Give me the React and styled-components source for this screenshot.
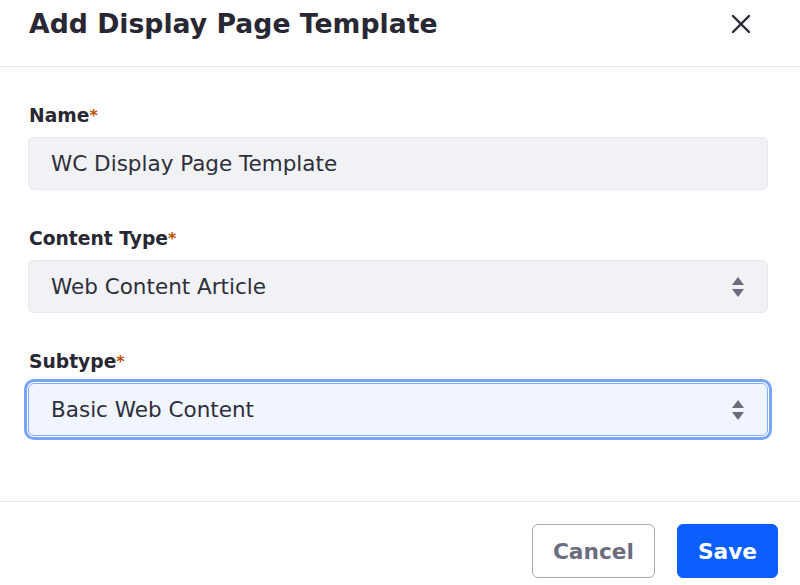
import styled, { createGlobalStyle } from "styled-components";

const GlobalStyle = createGlobalStyle`
    html, body {
        margin: 0;
        padding: 0;
        background: #ffffff;
        font-family: "DejaVu Sans", "Liberation Sans", sans-serif;
        color: #272833;
    }
`;

const fields = [
    { label: 'Name', value: 'WC Display Page Template', select: false },
    { label: 'Content Type', value: 'Web Content Article', select: true },
    { label: 'Subtype', value: 'Basic Web Content', select: true, focused: true },
];

const App = () => {
    return (
        <Modal>
            <GlobalStyle />
            <Header>
                <Title>Add Display Page Template</Title>
                <Close aria-label="close">
                    <svg width="22" height="22" viewBox="0 0 22 22">
                        <path d="M3 3 L19 19 M19 3 L3 19" stroke="#272833" strokeWidth="2.4" strokeLinecap="round" />
                    </svg>
                </Close>
            </Header>
            <Body>
                {fields.map(f => (
                    <Group key={f.label}>
                        <Label>{f.label}<Star>*</Star></Label>
                        <Field $focused={f.focused}>
                            <span>{f.value}</span>
                            {f.select && (
                                <svg width="14" height="22" viewBox="0 0 14 22">
                                    <path d="M7 1 L13 9 L1 9 Z" fill="#6b6c7e" />
                                    <path d="M7 21 L13 13 L1 13 Z" fill="#6b6c7e" />
                                </svg>
                            )}
                        </Field>
                    </Group>
                ))}
            </Body>
            <Footer>
                <Button>Cancel</Button>
                <Button $primary>Save</Button>
            </Footer>
        </Modal>
    )
}

const Modal = styled.div`
    width: 800px;
    display: flex;
    flex-direction: column;
`;

const Header = styled.div`
    height: 67px;
    box-sizing: border-box;
    border-bottom: 1px solid #e7e7ed;
    display: flex;
    align-items: flex-start;
    justify-content: space-between;
    padding: 6px 48px 0 29px;
`;

const Title = styled.h1`
    margin: 0;
    font-size: 26.7px;
    font-weight: bold;
    line-height: 36px;
    color: #272833;
`;

const Close = styled.button`
    border: none;
    background: transparent;
    padding: 0;
    margin-top: 7px;
    width: 22px;
    height: 22px;
    display: flex;
`;

const Body = styled.div`
    padding: 37px 32px 65px 28px;
    display: flex;
    flex-direction: column;
    gap: 37px;
    border-bottom: 1px solid #e7e7ed;
`;

const Group = styled.div`
    display: flex;
    flex-direction: column;
    gap: 9px;
`;

const Label = styled.label`
    font-size: 18.7px;
    font-weight: bold;
    color: #272833;
    padding-left: 1px;
    line-height: 24px;
`;

const Star = styled.span`
    color: #b95000;
    font-size: 16px;
    vertical-align: top;
`;

const Field = styled.div`
    height: 53px;
    box-sizing: border-box;
    border-radius: 6px;
    border: 1px solid ${p => p.$focused ? '#80acff' : '#e7e7ed'};
    background: ${p => p.$focused ? '#f0f5ff' : '#f1f2f5'};
    box-shadow: ${p => p.$focused ? '0 0 0 1px #ffffff, 0 0 0 4px #75a4fd' : 'none'};
    display: flex;
    align-items: center;
    justify-content: space-between;
    padding: 0 22px 0 22px;
    font-size: 21.5px;
    color: #2e2f3a;
`;

const Footer = styled.div`
    display: flex;
    justify-content: flex-end;
    gap: 22px;
    padding: 22px 22px 0 0;
`;

const Button = styled.button`
    height: 54px;
    box-sizing: border-box;
    border-radius: 6px;
    font-family: "DejaVu Sans", sans-serif;
    font-size: 21.7px;
    font-weight: bold;
    padding: 0 20px;
    border: 1px solid ${p => p.$primary ? '#0b5fff' : '#a7a9bc'};
    background: ${p => p.$primary ? '#0b5fff' : '#ffffff'};
    color: ${p => p.$primary ? '#ffffff' : '#6b6c7e'};
`;

export default App
